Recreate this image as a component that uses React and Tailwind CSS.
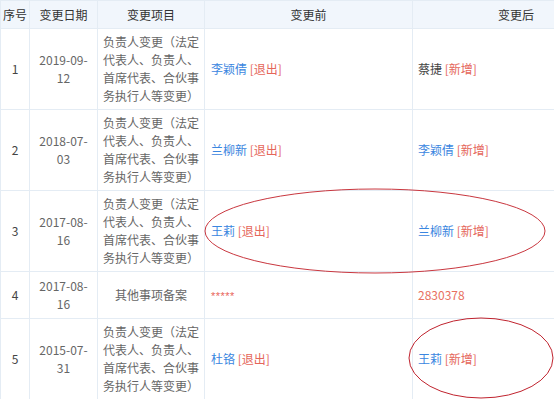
import React from 'react';

const rows = [
  { no: 1, date: ['2019-09-', '12'], item: 'long', before: { name: '李颖倩', tag: '[退出]' }, after: { name: '蔡捷', tag: '[新增]', plain: true } },
  { no: 2, date: ['2018-07-', '03'], item: 'long', before: { name: '兰柳新', tag: '[退出]' }, after: { name: '李颖倩', tag: '[新增]' } },
  { no: 3, date: ['2017-08-', '16'], item: 'long', before: { name: '王莉', tag: '[退出]' }, after: { name: '兰柳新', tag: '[新增]' } },
  { no: 4, date: ['2017-08-', '16'], item: '其他事项备案', before: { masked: '*****' }, after: { value: '2830378' } },
  { no: 5, date: ['2015-07-', '31'], item: 'long', before: { name: '杜铬', tag: '[退出]' }, after: { name: '王莉', tag: '[新增]' } },
];

const longItem = '负责人变更（法定代表人、负责人、首席代表、合伙事务执行人等变更）';

const Person = ({ cell }) => {
  if (cell.masked) return <span className="text-[11px] text-[#e8665c] tracking-[0.5px]" style={{ fontFamily: '"Liberation Sans", sans-serif' }}>{cell.masked}</span>;
  if (cell.value) return <span className="text-[#e8705f]">{cell.value}</span>;
  return (
    <span>
      <span className={cell.plain ? 'text-[#444]' : 'text-[#3a86e0]'}>{cell.name}</span>{' '}
      <span className="text-[#e5665a]">{cell.tag}</span>
    </span>
  );
};

export default function App() {
  return (
    <div className="relative w-[554px] h-[399px] overflow-hidden bg-white" style={{ fontFamily: '"Noto Sans CJK SC", "Noto Sans", sans-serif' }}>
      <table className="table-fixed border-collapse w-[619px] text-[12px] leading-[18px] [text-spacing-trim:space-all]">
        <colgroup>
          <col className="w-[29px]" />
          <col className="w-[68px]" />
          <col className="w-[107px]" />
          <col className="w-[208px]" />
          <col className="w-[207px]" />
        </colgroup>
        <thead>
          <tr className="bg-[#f1f6fc] h-[28px] text-[#333]">
            {['序号', '变更日期', '变更项目', '变更前', '变更后'].map(h => (
              <th key={h} className="font-normal text-center border border-[#e4ecf4] px-0 whitespace-nowrap">{h}</th>
            ))}
          </tr>
        </thead>
        <tbody>
          {rows.map(r => (
            <tr key={r.no} className={r.item === 'long' ? 'h-[81px]' : 'h-[47px]'}>
              <td className="text-center text-[#444] border border-[#e4ecf4]">{r.no}</td>
              <td className="text-center text-[#666] border border-[#e4ecf4] px-[6px]">
                {r.date[0]}<br />{r.date[1]}
              </td>
              <td className="text-center text-[#666] border border-[#e4ecf4] px-[3px] py-[4px]">
                {r.item === 'long' ? longItem : r.item}
              </td>
              <td className="text-left border border-[#e4ecf4] px-[6px]"><Person cell={r.before} /></td>
              <td className="text-left border border-[#e4ecf4] px-[5px]"><Person cell={r.after} /></td>
            </tr>
          ))}
        </tbody>
      </table>
      <svg className="absolute left-0 top-0 pointer-events-none" width="554" height="399" viewBox="0 0 554 399">
        <ellipse cx="375" cy="231" rx="170" ry="42" fill="none" stroke="#c9373f" strokeWidth="1" />
        <ellipse cx="481" cy="358" rx="72" ry="40" fill="none" stroke="#c0232e" strokeWidth="1" />
      </svg>
    </div>
  );
}
